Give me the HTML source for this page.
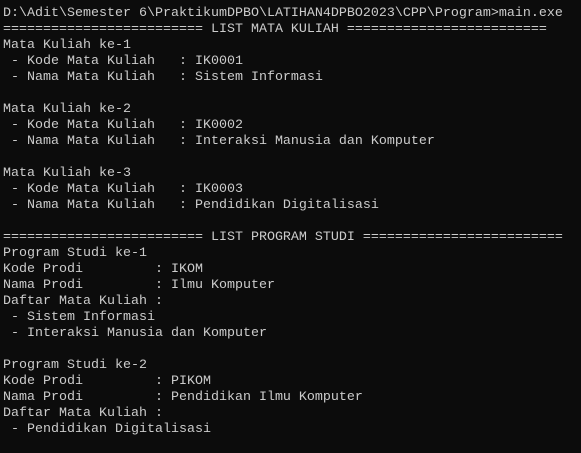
<!DOCTYPE html>
<html><head><meta charset="utf-8"><style>
html,body{margin:0;padding:0;background:#0c0c0c;width:581px;height:453px;overflow:hidden}
pre{margin:0;padding:6px 0 0 3px;font-family:"Liberation Mono",monospace;font-size:13.333px;line-height:16px;color:#cccccc;white-space:pre}
</style></head><body><pre>D:\Adit\Semester 6\PraktikumDPBO\LATIHAN4DPBO2023\CPP\Program&gt;main.exe
========================= LIST MATA KULIAH =========================
Mata Kuliah ke-1
 - Kode Mata Kuliah   : IK0001
 - Nama Mata Kuliah   : Sistem Informasi

Mata Kuliah ke-2
 - Kode Mata Kuliah   : IK0002
 - Nama Mata Kuliah   : Interaksi Manusia dan Komputer

Mata Kuliah ke-3
 - Kode Mata Kuliah   : IK0003
 - Nama Mata Kuliah   : Pendidikan Digitalisasi

========================= LIST PROGRAM STUDI =========================
Program Studi ke-1
Kode Prodi         : IKOM
Nama Prodi         : Ilmu Komputer
Daftar Mata Kuliah :
 - Sistem Informasi
 - Interaksi Manusia dan Komputer

Program Studi ke-2
Kode Prodi         : PIKOM
Nama Prodi         : Pendidikan Ilmu Komputer
Daftar Mata Kuliah :
 - Pendidikan Digitalisasi
</pre></body></html>
